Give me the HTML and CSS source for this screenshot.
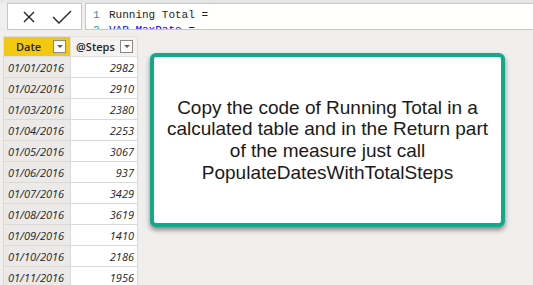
FILE: index.html
```html
<!DOCTYPE html>
<html lang="en">
<head>
  <meta charset="UTF-8">
  <meta name="viewport" content="width=device-width, initial-scale=1.0">
  <title>Running Total</title>
  <link rel="stylesheet" href="styles.css">
</head>
<body>

  <div class="formula-bar">
    <div class="formula-actions">
      <svg width="12" height="12" viewBox="0 0 12 12" class="icon">
        <path d="M1 1 L11 11 M11 1 L1 11" />
      </svg>
      <svg width="20" height="14" viewBox="0 0 20 14" class="icon">
        <path d="M1 7 L7 13 L19 1" />
      </svg>
    </div>
    <div class="formula-code">
      <div class="code-line"><span class="line-no">1</span>Running Total =</div>
      <div class="code-line"><span class="line-no">2</span><span class="kw">VAR MaxDate =</span></div>
    </div>
  </div>

  <div class="workspace">
    <table class="grid">
      <thead>
        <tr>
          <th class="col-date">Date <span class="filter"></span></th>
          <th class="col-steps">@Steps <span class="filter"></span></th>
        </tr>
      </thead>
      <tbody>
        <tr><td class="col-date">01/01/2016</td><td class="col-steps">2982</td></tr>
        <tr><td class="col-date">01/02/2016</td><td class="col-steps">2910</td></tr>
        <tr><td class="col-date">01/03/2016</td><td class="col-steps">2380</td></tr>
        <tr><td class="col-date">01/04/2016</td><td class="col-steps">2253</td></tr>
        <tr><td class="col-date">01/05/2016</td><td class="col-steps">3067</td></tr>
        <tr><td class="col-date">01/06/2016</td><td class="col-steps">937</td></tr>
        <tr><td class="col-date">01/07/2016</td><td class="col-steps">3429</td></tr>
        <tr><td class="col-date">01/08/2016</td><td class="col-steps">3619</td></tr>
        <tr><td class="col-date">01/09/2016</td><td class="col-steps">1410</td></tr>
        <tr><td class="col-date">01/10/2016</td><td class="col-steps">2186</td></tr>
        <tr><td class="col-date">01/11/2016</td><td class="col-steps">1956</td></tr>
      </tbody>
    </table>

    <div class="callout">
      <p>Copy the code of Running Total in a calculated table and in the Return part of the measure just call PopulateDatesWithTotalSteps</p>
    </div>
  </div>

</body>
</html>
```

FILE: styles.css
```css
html, body {
  height: 285px;
  overflow: hidden;
}

body {
  margin: 0;
  background-color: #f0efee;
  font-family: 'Open Sans', 'Liberation Sans', sans-serif;
  color: #252423;
}

/* barra de formula */
.formula-bar {
  display: flex;
  gap: 3px;
  padding: 3px 0 0 7px;
  height: 30px;
  background: linear-gradient(#e6e6e6 0, #e6e6e6 3px, #f0efee 3px);
}

.formula-actions {
  width: 75px;
  height: 27px;
  box-sizing: border-box;
  border: 1px solid #c8c6c4;
  background-color: #ffffff;
  display: flex;
  align-items: center;
  gap: 17px;
  padding-left: 15px;
}

.icon path {
  fill: none;
  stroke: #252423;
  stroke-width: 1.4;
}

.formula-code {
  flex: 1;
  height: 27px;
  box-sizing: border-box;
  border: 1px solid #c8c6c4;
  border-right: none;
  background-color: #fffffd;
  overflow: hidden;
  padding: 4px 0 0 7px;
  font-family: 'Liberation Mono', 'DejaVu Sans Mono', monospace;
  font-size: 11px;
  line-height: 15px;
  color: #1e1e1e;
}

.line-no {
  color: #2b91af;
  display: inline-block;
  width: 16px;
}

.kw {
  color: #0000ff;
}

/* tabla */
.workspace {
  display: flex;
  align-items: flex-start;
  padding: 3px 0 0 3px;
}

.grid {
  border-collapse: collapse;
  font-size: 11px;
}

.grid th,
.grid td {
  border: 1px solid #dad9d7;
  padding: 0 4px;
}

.grid th {
  height: 19px;
  font-weight: 600;
  text-align: left;
  white-space: nowrap;
  background-color: #f3f2f1;
  border-color: #e0dfdd;
}

.grid th.col-date {
  background-color: #f2c811;
  padding-left: 12px;
  width: 50px;
}

.grid th.col-steps {
  padding-left: 5px;
  width: 57px;
}

.filter {
  float: right;
  width: 13px;
  height: 13px;
  margin-top: 1px;
  box-sizing: border-box;
  border: 1px solid #8a8886;
  background-color: #fbfbfb;
  position: relative;
}

.filter::after {
  content: '';
  position: absolute;
  left: 3px;
  top: 4px;
  border-left: 3px solid transparent;
  border-right: 3px solid transparent;
  border-top: 3px solid #605e5c;
}

.grid td {
  height: 20px;
  font-style: italic;
}

.grid td.col-date {
  background-color: #ebeae8;
}

.grid td.col-steps {
  background-color: #ffffff;
  text-align: right;
  padding-right: 3px;
}

/* cuadro de nota */
.callout {
  margin: 17px 0 0 12px;
  width: 355px;
  height: 174px;
  box-sizing: border-box;
  border: 4px solid #12a98a;
  border-radius: 6px;
  background-color: #ffffff;
  box-shadow: 0 3px 5px rgba(0, 0, 0, 0.45);
  display: flex;
  align-items: center;
  justify-content: center;
}

.callout p {
  margin: 0;
  padding: 0 10px;
  text-align: center;
  font-family: 'Liberation Sans', Arial, sans-serif;
  font-size: 19px;
  line-height: 21.7px;
  color: #1a1a1a;
}
```
